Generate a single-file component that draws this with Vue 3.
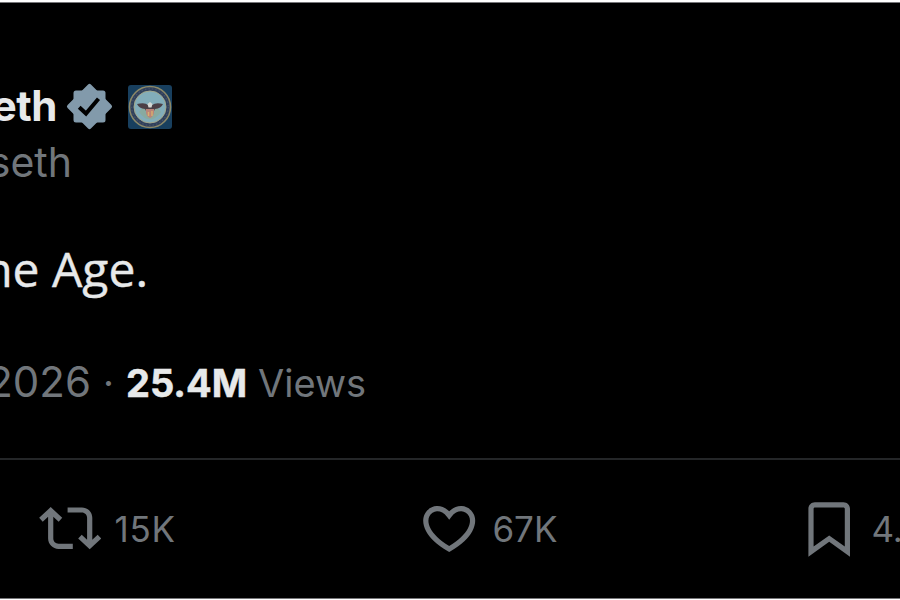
<script setup>
import { ref } from 'vue';

const post = ref({
    name: 'eth',
    handle: 'seth',
    text: 'he Age.',
    date: '2026',
    views: '25.4M',
});

const actions = ref([
    {
        key: 'repost',
        count: '15K',
        path: 'M4.5 3.88l4.432 4.14-1.364 1.46L5.5 7.55V16c0 1.1.896 2 2 2H13v2H7.5c-2.209 0-4-1.79-4-4V7.55L1.432 9.48.068 8.02 4.5 3.88zM16.5 6H11V4h5.5c2.209 0 4 1.79 4 4v8.45l2.068-1.93 1.364 1.46-4.432 4.14-4.432-4.14 1.364-1.46 2.068 1.93V8c0-1.1-.896-2-2-2z',
    },
    {
        key: 'like',
        count: '67K',
        path: 'M16.697 5.5c-1.222-.06-2.679.51-3.89 2.16l-.805 1.09-.806-1.09C9.984 6.01 8.526 5.44 7.304 5.5c-1.243.07-2.349.78-2.91 1.91-.552 1.12-.633 2.78.479 4.82 1.074 1.97 3.257 4.27 7.129 6.61 3.87-2.34 6.052-4.64 7.126-6.61 1.111-2.04 1.03-3.7.477-4.82-.561-1.13-1.666-1.84-2.908-1.91zm4.187 7.69c-1.351 2.48-4.001 5.12-8.379 7.67l-.503.3-.504-.3c-4.379-2.55-7.029-5.19-8.382-7.67-1.36-2.5-1.41-4.86-.514-6.67.887-1.79 2.647-2.91 4.601-3.01 1.651-.09 3.368.56 4.798 2.01 1.429-1.45 3.146-2.1 4.796-2.01 1.954.1 3.714 1.22 4.601 3.01.896 1.81.846 4.17-.514 6.67z',
    },
    {
        key: 'bookmark',
        count: '4.2K',
        path: 'M4 4.5C4 3.12 5.119 2 6.5 2h11C18.881 2 20 3.12 20 4.5v18.44l-8-5.71-8 5.71V4.5zM6.5 4c-.276 0-.5.22-.5.5v14.56l6-4.29 6 4.29V4.5c0-.28-.224-.5-.5-.5h-11z',
    },
]);
</script>

<template>
    <div class="post">
        <header class="author">
            <div class="name-row">
                <div class="cut name">{{ post.name }}</div>
                <!-- eight-pointed badge: two overlapping squares -->
                <svg class="verified" viewBox="0 0 51 51">
                    <rect x="9.5" y="9.5" width="32" height="32" rx="2.5" />
                    <rect x="9" y="9" width="33" height="33" rx="2" transform="rotate(45 25.5 25.5)" />
                    <path class="check" d="M15.2 26.2l6.8 6.3 12.5-14.7" />
                </svg>
                <!-- affiliation seal: eagle over a shield inside a gold ring -->
                <svg class="seal" viewBox="0 0 44 44">
                    <rect width="44" height="44" rx="3" fill="#183f5e" />
                    <circle cx="22" cy="22" r="20.5" fill="#30405c" stroke="#8b8868" stroke-width="1.6" />
                    <circle cx="22" cy="22" r="18.3" fill="none" stroke="#46546a" stroke-width="1.2" stroke-dasharray="1.5 2" />
                    <circle cx="22" cy="22" r="16" fill="#82adba" stroke="#a3a78b" stroke-width="1" />
                    <path d="M11 27q11 15 22 0l-4-5H15z" fill="#88aaa0" />
                    <path d="M9 19q8-2 11 1l2-2 2 2q4-3 11-1-2 4.5-8 5l-2 4h-6l-2-4q-6-.5-8-5z" fill="#4b3f46" />
                    <path d="M18 24h8v4q-1 4-4 5-3-1-4-5z" fill="#b98478" />
                    <path d="M20.5 27v4M24 26v5" stroke="#d7b070" stroke-width="1.4" />
                    <path d="M19.5 19l2.5-2 2.5 2-1 3.5h-3z" fill="#d3d8d4" />
                </svg>
            </div>
            <div class="cut handle">{{ post.handle }}</div>
        </header>

        <div class="cut body">{{ post.text }}</div>

        <div class="meta">
            <div class="cut date">{{ post.date }}</div>
            <span class="dot">·</span>
            <span class="views">{{ post.views }}</span>
            <span class="views-label">Views</span>
        </div>

        <div class="actions">
            <div v-for="a in actions" :key="a.key" class="action" :class="a.key">
                <svg viewBox="0 0 24 24"><path :d="a.path" /></svg>
                <span class="count">{{ a.count }}</span>
            </div>
        </div>
    </div>
</template>

<style>
body {
    background: #fff;
}
</style>

<style scoped>
.post {
    box-sizing: border-box;
    width: 900px;
    height: 597px;
    margin-top: 2px;
    border-top: 1px solid #77777a;
    border-bottom: 1px solid #77777a;
    padding-top: 73px;
    background: #000;
    color: #71767b;
    font-family: Inter, 'Liberation Sans', sans-serif;
    overflow: hidden;
    white-space: nowrap;
}

/* lines that run off the left edge, anchored by their right end */
.cut {
    display: flex;
    justify-content: flex-end;
    flex-shrink: 0;
}

.name-row {
    display: flex;
    align-items: center;
    height: 60px;
}

.name {
    width: 57px;
    padding-bottom: 2px;
    color: #e7e9ea;
    font-size: 42px;
    font-weight: 700;
    letter-spacing: -0.5px;
}

.verified {
    width: 51px;
    height: 51px;
    margin-left: 7px;
    fill: #829aab;
}

.verified .check {
    fill: none;
    stroke: #000;
    stroke-width: 4;
}

.seal {
    width: 44px;
    height: 44px;
    margin: 2px 0 0 13px;
}

.handle {
    width: 72px;
    height: 54px;
    line-height: 53px;
    font-size: 41px;
}

.body {
    width: 148px;
    height: 80px;
    margin-top: 39px;
    line-height: 80px;
    color: #e7e9ea;
    font-family: 'Open Sans', sans-serif;
    font-size: 48px;
    -webkit-text-stroke: 0.4px #e7e9ea;
}

.meta {
    display: flex;
    align-items: baseline;
    height: 60px;
    margin-top: 43px;
    line-height: 60px;
    font-size: 38px;
}

.date {
    width: 91px;
    font-size: 42px;
}

.dot {
    width: 35px;
    text-align: center;
}

.views {
    width: 132px;
    color: #e7e9ea;
    font-weight: 700;
    -webkit-text-stroke: 0.5px #e7e9ea;
}

.actions {
    display: flex;
    align-items: center;
    height: 136px;
    margin-top: 46px;
    border-top: 2px solid #242628;
}

.action {
    display: flex;
    align-items: center;
    flex-shrink: 0;
    width: 379px;
    gap: 12px;
}

.repost {
    margin-left: 39px;
}

.bookmark {
    margin-left: 1px;
    gap: 11px;
}

.action svg {
    width: 62.4px;
    height: 62.4px;
    flex-shrink: 0;
    fill: #71767b;
}

.count {
    padding-top: 2px;
    font-size: 35px;
}

.repost .count {
    padding-left: 1px;
    letter-spacing: 0.8px;
}
</style>
